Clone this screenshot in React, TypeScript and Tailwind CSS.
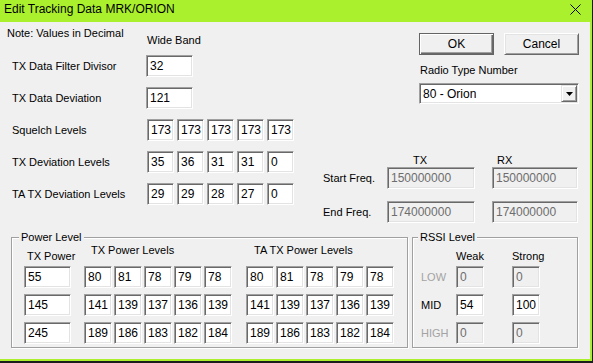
import React from "react";

const SUNKEN =
  "border border-t-[#a0a0a0] border-l-[#a0a0a0] border-b-white border-r-white shadow-[inset_1px_1px_0_#696969,inset_-1px_-1px_0_#e3e3e3]";

function Box({ v, w, dis }: { v: string; w: string; dis?: boolean }) {
  return (
    <div
      className={`${w} h-[22px] shrink-0 ${SUNKEN} flex items-center pl-[3px] text-[12px] leading-none ${
        dis ? "bg-[#f0f0f0] text-[#6d6d6d]" : "bg-white text-black"
      }`}
    >
      {v}
    </div>
  );
}

function Btn({ children, def }: { children: React.ReactNode; def?: boolean }) {
  return (
    <div
      className={`w-[75px] h-[22px] flex items-center justify-center bg-[#f0f0f0] text-[12px] leading-none ${
        def
          ? "border border-[#646464] shadow-[inset_1px_1px_0_#fff,inset_-1px_-1px_0_#696969,inset_-2px_-2px_0_#a0a0a0]"
          : "border border-t-white border-l-white border-b-[#696969] border-r-[#696969] shadow-[inset_1px_1px_0_#e3e3e3,inset_-1px_-1px_0_#a0a0a0]"
      }`}
    >
      {children}
    </div>
  );
}

function Combo() {
  return (
    <div className={`w-[160px] h-[21px] bg-white ${SUNKEN} flex items-center justify-between pl-[3px] pr-[1px] text-[12px] leading-none`}>
      <span>80 - Orion</span>
      <div className="w-[16px] h-[17px] bg-[#f0f0f0] border border-t-[#e3e3e3] border-l-[#e3e3e3] border-b-[#696969] border-r-[#696969] shadow-[inset_1px_1px_0_#fff,inset_-1px_-1px_0_#a0a0a0] flex items-center justify-center">
        <svg width="7" height="4" viewBox="0 0 7 4">
          <path d="M0 0H7L3.5 4Z" fill="#000" />
        </svg>
      </div>
    </div>
  );
}

function Row({ label, lw, children }: { label: string; lw: string; children: React.ReactNode }) {
  return (
    <div className="flex items-center h-[22px]">
      <div className={`${lw} pl-[12px] shrink-0 whitespace-nowrap`}>{label}</div>
      {children}
    </div>
  );
}

function Levels({ vals, w, gap }: { vals: string[]; w: string; gap: string }) {
  return (
    <div className={`flex ${gap}`}>
      {vals.map((v, i) => (
        <Box key={i} v={v} w={w} />
      ))}
    </div>
  );
}

export default function App() {
  const txLevels = [
    ["80", "81", "78", "79", "78"],
    ["141", "139", "137", "136", "139"],
    ["189", "186", "183", "182", "184"],
  ];
  return (
    <div className="w-[593px] h-[363px] bg-[#1c1c1c] overflow-hidden font-['Liberation_Sans',Arial,sans-serif] text-[12px] leading-[13px] text-black whitespace-nowrap">
      <div className="w-[592px] h-[361px] bg-[#abf02c] flex flex-col">
        <div className="h-[22px] flex items-start justify-between pl-[4px] pr-[11px] pt-[2px]">
          <span className="text-[12px] leading-[14px]">Edit Tracking Data MRK/ORION</span>
          <svg width="11" height="11" viewBox="0 0 11 11" className="mt-[2px]">
            <path d="M0.5 0.5L10.5 10.5M10.5 0.5L0.5 10.5" stroke="#000" strokeWidth="1" />
          </svg>
        </div>
        <div className="w-[590px] h-[337px] bg-[#f0f0f0] flex flex-col text-[11px]">
          <div className="flex h-[215px]">
            <div className="w-[300px] flex flex-col">
              <div className="flex h-[33px]">
                <div className="w-[147px] pl-[7px] pt-[5px]">Note: Values in Decimal</div>
                <div className="pt-[12px]">Wide Band</div>
              </div>
              <div className="flex flex-col gap-[10px]">
                <Row label="TX Data Filter Divisor" lw="w-[146px]">
                  <Box v="32" w="w-[47px]" />
                </Row>
                <Row label="TX Data Deviation" lw="w-[146px]">
                  <Box v="121" w="w-[47px]" />
                </Row>
                <Row label="Squelch Levels" lw="w-[147px]">
                  <Levels vals={["173", "173", "173", "173", "173"]} w="w-[27px]" gap="gap-[3px]" />
                </Row>
                <Row label="TX Deviation Levels" lw="w-[147px]">
                  <Levels vals={["35", "36", "31", "31", "0"]} w="w-[27px]" gap="gap-[3px]" />
                </Row>
                <Row label="TA TX Deviation Levels" lw="w-[147px]">
                  <Levels vals={["29", "29", "28", "27", "0"]} w="w-[27px]" gap="gap-[3px]" />
                </Row>
              </div>
            </div>
            <div className="flex-1 flex flex-col pt-[11px]">
              <div className="flex gap-[10px] pl-[119px]">
                <Btn def>OK</Btn>
                <Btn>Cancel</Btn>
              </div>
              <div className="pl-[120px] mt-[9px]">Radio Type Number</div>
              <div className="pl-[119px] mt-[6px]">
                <Combo />
              </div>
              <div className="flex pl-[113px] mt-[50px] h-[13px]">
                <span className="w-[84px]">TX</span>
                <span>RX</span>
              </div>
              <div className="flex items-center pl-[23px] h-[22px]">
                <span className="w-[64px] shrink-0">Start Freq.</span>
                <Box v="150000000" w="w-[88px]" dis />
                <div className="w-[17px] shrink-0" />
                <Box v="150000000" w="w-[86px]" dis />
              </div>
              <div className="flex items-center pl-[23px] h-[22px] mt-[12px]">
                <span className="w-[64px] shrink-0">End Freq.</span>
                <Box v="174000000" w="w-[88px]" dis />
                <div className="w-[17px] shrink-0" />
                <Box v="174000000" w="w-[86px]" dis />
              </div>
            </div>
          </div>
          <div className="flex pl-[11px] gap-[4px]">
            <div className="relative w-[397px] h-[111px] border border-[#a0a0a0] shadow-[inset_1px_1px_0_#fff,1px_1px_0_#fff]">
              <span className="absolute -top-[7px] left-[7px] px-[2px] bg-[#f0f0f0]">Power Level</span>
              <div className="flex pl-[12px]">
                <div className="flex flex-col w-[47px]">
                  <div className="h-[28px] pl-[3px] pt-[12px]">TX Power</div>
                  <div className="flex flex-col gap-[6px]">
                    <Box v="55" w="w-[47px]" />
                    <Box v="145" w="w-[47px]" />
                    <Box v="245" w="w-[47px]" />
                  </div>
                </div>
                <div className="flex flex-col ml-[13px]">
                  <div className="h-[28px] pl-[7px] pt-[6px]">TX Power Levels</div>
                  <div className="flex flex-col gap-[6px]">
                    {txLevels.map((r, i) => (
                      <Levels key={i} vals={r} w="w-[28px]" gap="gap-[2px]" />
                    ))}
                  </div>
                </div>
                <div className="flex flex-col ml-[14px]">
                  <div className="h-[28px] pl-[8px] pt-[6px]">TA TX Power Levels</div>
                  <div className="flex flex-col gap-[6px]">
                    {txLevels.map((r, i) => (
                      <Levels key={i} vals={r} w="w-[28px]" gap="gap-[2px]" />
                    ))}
                  </div>
                </div>
              </div>
            </div>
            <div className="relative w-[166px] h-[111px] border border-[#a0a0a0] shadow-[inset_1px_1px_0_#fff,1px_1px_0_#fff]">
              <span className="absolute -top-[7px] left-[5px] px-[2px] bg-[#f0f0f0]">RSSI Level</span>
              <div className="flex flex-col pl-[8px]">
                <div className="flex h-[28px] pt-[12px]">
                  <span className="w-[35px]" />
                  <span className="w-[56px]">Weak</span>
                  <span>Strong</span>
                </div>
                <div className="flex flex-col gap-[6px]">
                  <div className="flex items-center">
                    <span className="w-[35px] text-[#a3a3a3]">LOW</span>
                    <Box v="0" w="w-[28px]" dis />
                    <div className="w-[28px]" />
                    <Box v="0" w="w-[28px]" dis />
                  </div>
                  <div className="flex items-center">
                    <span className="w-[35px]">MID</span>
                    <Box v="54" w="w-[28px]" />
                    <div className="w-[28px]" />
                    <Box v="100" w="w-[28px]" />
                  </div>
                  <div className="flex items-center">
                    <span className="w-[35px] text-[#a3a3a3]">HIGH</span>
                    <Box v="0" w="w-[28px]" dis />
                    <div className="w-[28px]" />
                    <Box v="0" w="w-[28px]" dis />
                  </div>
                </div>
              </div>
            </div>
          </div>
        </div>
      </div>
    </div>
  );
}
